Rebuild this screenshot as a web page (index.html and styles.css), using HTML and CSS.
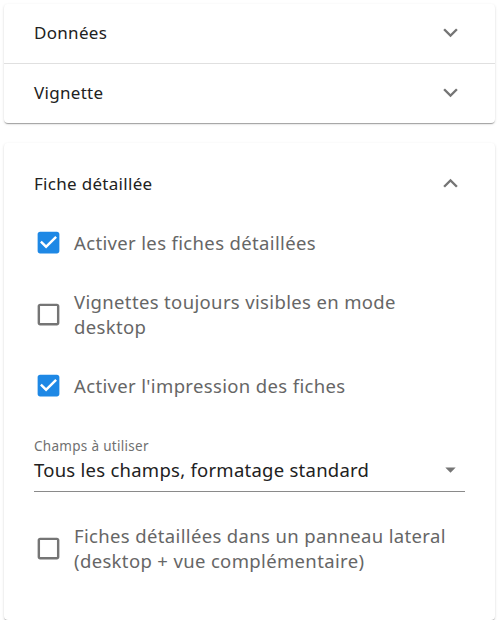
FILE: index.html
```
<!DOCTYPE html>
<html lang="fr">
<head>
<meta charset="utf-8">
<link rel="stylesheet" href="styles.css">
</head>
<body>
<div class="page">
  <div class="card">
    <div class="panel-head">
      <span class="panel-title">Données</span>
      <svg class="chev" viewBox="0 0 24 24"><path d="M16.59 8.59L12 13.17 7.41 8.59 6 10l6 6 6-6z"/></svg>
    </div>
    <div class="divider"></div>
    <div class="panel-head">
      <span class="panel-title">Vignette</span>
      <svg class="chev" viewBox="0 0 24 24"><path d="M16.59 8.59L12 13.17 7.41 8.59 6 10l6 6 6-6z"/></svg>
    </div>
  </div>

  <div class="card card-open">
    <div class="panel-head head-open">
      <span class="panel-title">Fiche détaillée</span>
      <svg class="chev" viewBox="0 0 24 24"><path d="M12 8l-6 6 1.41 1.41L12 10.83l4.59 4.58L18 14z"/></svg>
    </div>
    <div class="panel-body">
      <label class="check">
        <svg class="box on" viewBox="0 0 24 24"><path d="M19 3H5c-1.11 0-2 .9-2 2v14c0 1.1.89 2 2 2h14c1.11 0 2-.9 2-2V5c0-1.1-.89-2-2-2zm-9 14l-5-5 1.41-1.41L10 14.17l7.59-7.59L19 8l-9 9z"/></svg>
        <span class="check-label">Activer les fiches détaillées</span>
      </label>
      <label class="check">
        <svg class="box off" viewBox="0 0 24 24"><path d="M19 5v14H5V5h14m0-2H5c-1.1 0-2 .9-2 2v14c0 1.1.9 2 2 2h14c1.1 0 2-.9 2-2V5c0-1.1-.9-2-2-2z"/></svg>
        <span class="check-label">Vignettes toujours visibles en mode desktop</span>
      </label>
      <label class="check">
        <svg class="box on" viewBox="0 0 24 24"><path d="M19 3H5c-1.11 0-2 .9-2 2v14c0 1.1.89 2 2 2h14c1.11 0 2-.9 2-2V5c0-1.1-.89-2-2-2zm-9 14l-5-5 1.41-1.41L10 14.17l7.59-7.59L19 8l-9 9z"/></svg>
        <span class="check-label">Activer l'impression des fiches</span>
      </label>
      <div class="select">
        <div class="select-label">Champs à utiliser</div>
        <div class="select-field">
          <span class="select-value">Tous les champs, formatage standard</span>
          <svg class="arrow" viewBox="0 0 24 24"><path d="M7 10l5 5 5-5z"/></svg>
        </div>
      </div>
      <label class="check">
        <svg class="box off" viewBox="0 0 24 24"><path d="M19 5v14H5V5h14m0-2H5c-1.1 0-2 .9-2 2v14c0 1.1.9 2 2 2h14c1.1 0 2-.9 2-2V5c0-1.1-.9-2-2-2z"/></svg>
        <span class="check-label">Fiches détaillées dans un panneau lateral (desktop + vue complémentaire)</span>
      </label>
    </div>
  </div>
</div>
</body>
</html>
```

FILE: styles.css
```
html, body {
  margin: 0;
  padding: 0;
  background: #ffffff;
}
body {
  font-family: "Noto Sans", "Open Sans", sans-serif;
  color: rgba(0, 0, 0, 0.87);
}
.page {
  padding: 4px 4px 0 4px;
  width: 491px;
  display: flex;
  flex-direction: column;
  gap: 20px;
}
.card {
  background: #fff;
  border-radius: 4px;
  box-shadow: 0 2px 1px -1px rgba(0,0,0,0.2), 0 1px 1px 0 rgba(0,0,0,0.14), 0 1px 3px 0 rgba(0,0,0,0.12);
}
.panel-head {
  height: 59px;
  padding: 0 30px 3px 30px;
  box-sizing: border-box;
  display: flex;
  align-items: center;
  justify-content: space-between;
}
.head-open {
  height: 80px;
  padding-bottom: 0;
}
.panel-title {
  font-size: 17px;
  letter-spacing: 0.3px;
  color: #212121;
}
.divider {
  height: 1px;
  background: #e0e0e0;
}
.chev {
  width: 29px;
  height: 29px;
  fill: #757575;
}
.panel-body {
  padding: 5px 30px 47px 30px;
  display: flex;
  flex-direction: column;
}
.check {
  display: flex;
  align-items: center;
  gap: 11px;
  margin-bottom: 32px;
}
.box {
  width: 29px;
  height: 29px;
  flex: none;
}
.box.on { fill: #1e88e5; }
.box.off { fill: #757575; }
.check-label {
  font-size: 18.5px;
  letter-spacing: 0.35px;
  line-height: 25px;
  color: #666666;
}
.select {
  margin-top: 6px;
  margin-bottom: 31px;
}
.select-label {
  font-size: 13.5px;
  letter-spacing: 0.3px;
  line-height: 16px;
  color: #707070;
}
.select-field {
  display: flex;
  align-items: center;
  justify-content: space-between;
  padding: 3px 0 9px 0;
  border-bottom: 1px solid #8a8a8a;
}
.select-value {
  font-size: 18.5px;
  letter-spacing: 0.25px;
  line-height: 25px;
  color: #212121;
}
.arrow {
  width: 29px;
  height: 25px;
  fill: #757575;
  flex: none;
}
.check:last-child {
  margin-bottom: 0;
}
```
